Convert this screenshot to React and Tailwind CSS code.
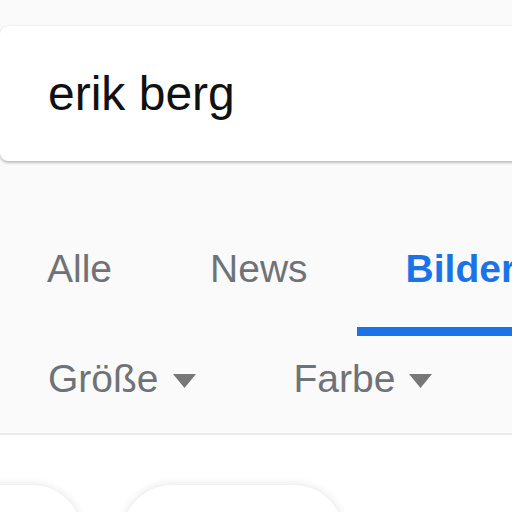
const tabs = [
  { label: 'Alle', active: false },
  { label: 'News', active: false },
  { label: 'Bilder', active: true },
]

const filters = ['Größe', 'Farbe']

function Caret() {
  return (
    <svg width="23" height="14" viewBox="0 0 23 14" className="ml-[14px] mt-[4px] shrink-0">
      <path d="M0 0 H23 L11.5 14 Z" fill="#777" />
    </svg>
  )
}

export default function App() {
  return (
    <div className="w-[512px] h-[512px] overflow-hidden bg-white font-['Liberation_Sans',Arial,sans-serif]">
      <div className="bg-[#fafafa] pt-[26px] border-b-2 border-[#ebebeb]">
        <div className="w-[560px] h-[135px] bg-white rounded-[8px] shadow-[0_2px_3px_rgba(0,0,0,0.22),0_0_2px_rgba(0,0,0,0.12)] pl-[48px] pt-[44px]">
          <span className="text-[48px] leading-[48px] text-[#111]">erik berg</span>
        </div>

        <div className="flex mt-[88px] ml-[-2px] whitespace-nowrap">
          {tabs.map((t) => (
            <div
              key={t.label}
              className={`px-[49px] pb-[39px] border-b-[9px] text-[39px] leading-[39px] ${
                t.active ? 'border-[#1a73e8] text-[#1a73e8] font-bold w-[200px] shrink-0' : 'border-transparent text-[#6f7377]'
              }`}
            >
              {t.label}
            </div>
          ))}
        </div>

        <div className="flex items-center mt-[23px] pb-[35px] pl-[48px] gap-[98px] whitespace-nowrap">
          {filters.map((f) => (
            <div key={f} className="flex items-center text-[39px] leading-[39px] text-[#6f7377]">
              {f}
              <Caret />
            </div>
          ))}
        </div>
      </div>

      <div className="flex gap-[40px] mt-[50px] ml-[-100px]">
        <div className="w-[182px] h-[100px] shrink-0 bg-white rounded-[50px] shadow-[0_0_10px_rgba(0,0,0,0.12)]" />
        <div className="w-[222px] h-[100px] shrink-0 bg-white rounded-[50px] shadow-[0_0_10px_rgba(0,0,0,0.12)]" />
      </div>
    </div>
  )
}
